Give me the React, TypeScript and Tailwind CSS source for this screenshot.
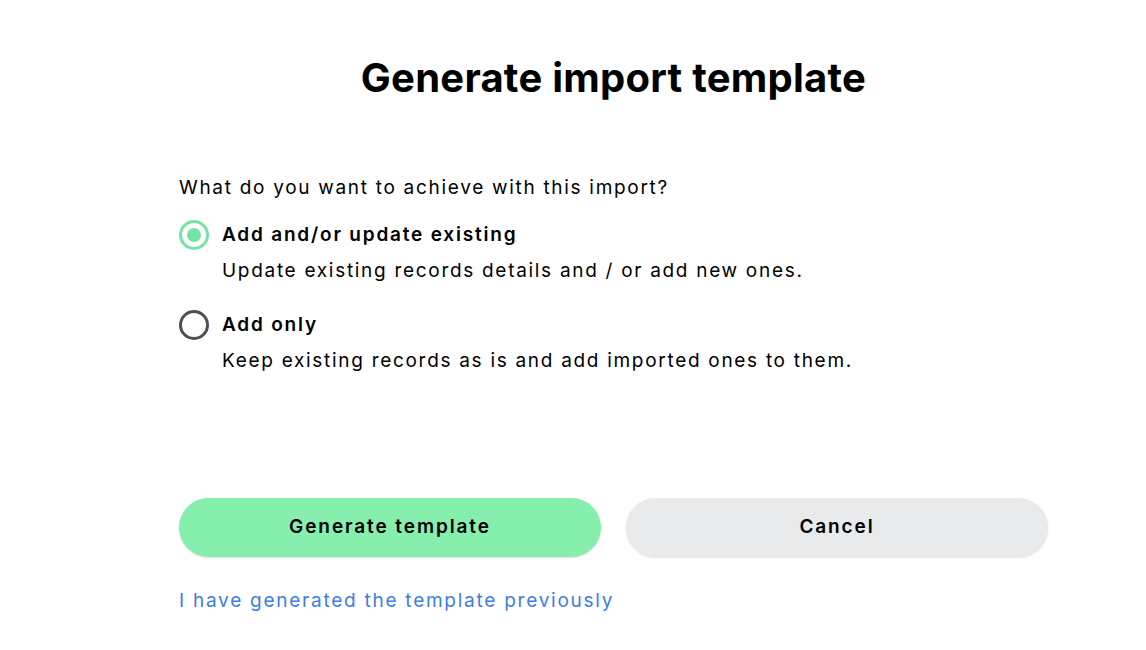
export default function App() {
  const font = { fontFamily: 'Inter, "Noto Sans", sans-serif' };
  return (
    <div className="min-h-[650px] w-full bg-white text-black" style={font}>
      <div className="ml-[179px] flex w-[869px] flex-col pt-[52px]">
        <h1 className="text-center text-[40px] font-bold leading-[52px] tracking-[0.25px]">
          Generate import template
        </h1>

        <p className="mt-[71px] text-[19px] leading-[26px] tracking-[1.7px]">What do you want to achieve with this import?</p>

        <div className="mt-[18px] flex flex-col gap-[25px]">
          <label className="flex items-start gap-[13px]">
            <span className="mt-[1px] flex h-[30px] w-[30px] shrink-0 items-center justify-center rounded-full border-[3px] border-[#74e3a3]">
              <span className="h-[14px] w-[14px] rounded-full bg-[#74e3a3]" />
            </span>
            <span className="flex flex-col">
              <span className="text-[19px] font-semibold leading-[32px] tracking-[1.8px]">Add and/or update existing</span>
              <span className="mt-[7px] text-[19px] leading-[26px] tracking-[1.7px]">Update existing records details and / or add new ones.</span>
            </span>
          </label>
          <label className="flex items-start gap-[13px]">
            <span className="mt-[1px] flex h-[30px] w-[30px] shrink-0 items-center justify-center rounded-full border-[3px] border-[#4b5058]" />
            <span className="flex flex-col">
              <span className="text-[19px] font-semibold leading-[32px] tracking-[1.8px]">Add only</span>
              <span className="mt-[7px] text-[19px] leading-[26px] tracking-[1.7px]">Keep existing records as is and add imported ones to them.</span>
            </span>
          </label>
        </div>

        <div className="mt-[124px] flex gap-[25px]">
          <button className="h-[59px] flex-1 rounded-full bg-[#86efad] text-[19px] font-semibold tracking-[1.9px] shadow-[0_1px_2px_rgba(0,0,0,0.12)]">
            Generate template
          </button>
          <button className="h-[59px] flex-1 rounded-full bg-[#e9eaec] text-[19px] font-semibold tracking-[1.9px] shadow-[0_1px_2px_rgba(0,0,0,0.12)]">
            Cancel
          </button>
        </div>

        <a className="mt-[31px] self-start text-[19px] leading-[26px] tracking-[1.75px] text-[#3b7fe0]">
          I have generated the template previously
        </a>
      </div>
    </div>
  );
}
